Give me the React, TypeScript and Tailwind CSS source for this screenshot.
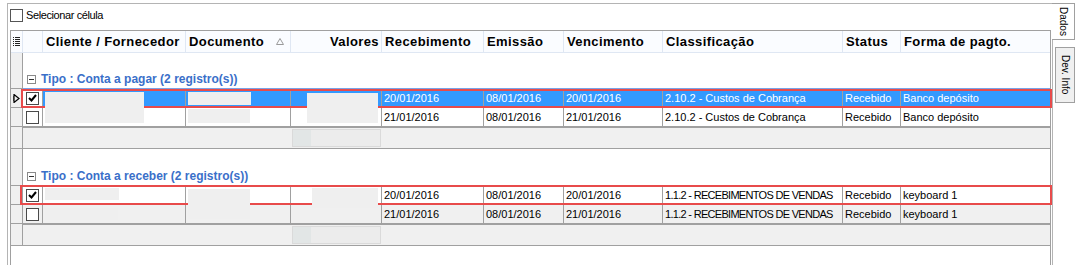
import React from 'react';

const cols = 'grid grid-cols-[12px_20px_143px_105px_91px_102px_80px_99px_180px_58px_149px]';

type Row = {
  checked: boolean;
  selected?: boolean;
  shaded?: boolean;
  receb: string;
  emis: string;
  venc: string;
  classif: string;
  status: string;
  forma: string;
};

const pagar: Row[] = [
  { checked: true, selected: true, receb: '20/01/2016', emis: '08/01/2016', venc: '20/01/2016', classif: '2.10.2 - Custos de Cobrança', status: 'Recebido', forma: 'Banco depósito' },
  { checked: false, receb: '21/01/2016', emis: '08/01/2016', venc: '21/01/2016', classif: '2.10.2 - Custos de Cobrança', status: 'Recebido', forma: 'Banco depósito' },
];

const receber: Row[] = [
  { checked: true, receb: '20/01/2016', emis: '08/01/2016', venc: '20/01/2016', classif: '1.1.2 - RECEBIMENTOS DE VENDAS', status: 'Recebido', forma: 'keyboard 1' },
  { checked: false, shaded: true, receb: '21/01/2016', emis: '08/01/2016', venc: '21/01/2016', classif: '1.1.2 - RECEBIMENTOS DE VENDAS', status: 'Recebido', forma: 'keyboard 1' },
];

function CheckBox({ checked }: { checked: boolean }) {
  return (
    <div className="w-[13px] h-[13px] border border-[#4a4a4a] bg-white flex items-center justify-center">
      {checked && (
        <svg width="9" height="8" viewBox="0 0 9 8">
          <path d="M1 4 L3.5 6.5 L8 1" stroke="#000" strokeWidth="2" fill="none" />
        </svg>
      )}
    </div>
  );
}

function HeaderCell({ children, className = '' }: { children?: React.ReactNode; className?: string }) {
  return (
    <div className={`border-r border-[#dfe7f3] flex items-center pl-[3px] text-[13px] font-bold tracking-[0.4px] text-black whitespace-nowrap overflow-hidden ${className}`}>
      {children}
    </div>
  );
}

function Cell({ children, className = '' }: { children?: React.ReactNode; className?: string }) {
  return (
    <div className={`border-r border-[#a0a0a0] flex items-center pl-[2px] whitespace-nowrap overflow-hidden ${className}`}>
      {children}
    </div>
  );
}

function DataRow({ row }: { row: Row }) {
  const bg = row.selected ? 'bg-[#3399ff] text-white' : row.shaded ? 'bg-[#f0f0f0] text-black' : 'bg-white text-black';
  return (
    <div className={`${cols} h-[19px] text-[11px]`}>
      <div className="bg-[#f0f0f0] border-r border-b border-[#a0a0a0] flex items-center justify-center">
        {row.selected && (
          <svg width="7" height="9" viewBox="0 0 7 9">
            <path d="M1 0.5 L6 4.5 L1 8.5 Z" stroke="#000" strokeWidth="1.2" fill="none" />
            <path d="M0 2 V7" stroke="#000" strokeWidth="1" />
          </svg>
        )}
      </div>
      <div className={`border-r border-b border-[#a0a0a0] flex items-center justify-center ${row.shaded ? 'bg-[#f0f0f0]' : 'bg-white'}`}>
        <CheckBox checked={row.checked} />
      </div>
      <Cell className={`border-b ${bg}`} />
      <Cell className={`border-b ${bg}`} />
      <Cell className={`border-b ${bg}`} />
      <Cell className={`border-b ${bg}`}>{row.receb}</Cell>
      <Cell className={`border-b ${bg}`}>{row.emis}</Cell>
      <Cell className={`border-b ${bg}`}>{row.venc}</Cell>
      <Cell className={`border-b ${bg}`}>
        <span className={row.classif.startsWith('1.1.2') ? 'tracking-[-0.7px]' : ''}>{row.classif}</span>
      </Cell>
      <Cell className={`border-b ${bg}`}>{row.status}</Cell>
      <Cell className={`border-b border-r-0 ${bg}`}>{row.forma}</Cell>
    </div>
  );
}

function GroupHeader({ label, focused, tall }: { label: string; focused?: boolean; tall?: boolean }) {
  return (
    <div className={`${cols} ${tall ? 'h-[37px]' : 'h-[36px]'}`}>
      <div className="bg-[#f0f0f0] border-r border-b border-[#a0a0a0]" />
      <div className={`col-span-10 bg-white flex items-end pl-[4px] ${focused ? 'border-b border-[#7aa2e6] pb-[2px]' : 'pb-[3px]'}`}>
        <div className="w-[9px] h-[9px] border border-[#8a8a8a] bg-white flex items-center justify-center mb-[2px]">
          <div className="w-[5px] h-px bg-[#333]" />
        </div>
        <span className="ml-[5px] text-[12px] font-bold text-[#3a6fc9] leading-[14px]">{label}</span>
      </div>
    </div>
  );
}

function GroupFooter() {
  return (
    <div className={`${cols} h-[22px]`}>
      <div className="bg-[#f0f0f0] border-r border-b border-[#a0a0a0]" />
      <div className="col-span-3 bg-[#f0f0f0] border-t border-b border-[#a0a0a0]" />
      <div className="bg-[#f0f0f0] border-t border-b border-[#a0a0a0] p-[1px]">
        <div className="h-full border border-[#dadada] bg-[#ececec] flex">
          <div className="w-[18px] bg-[#e2e6e6]" />
        </div>
      </div>
      <div className="col-span-6 bg-[#f0f0f0] border-t border-b border-[#a0a0a0]" />
    </div>
  );
}

export default function App() {
  return (
    <div className="relative w-[1082px] h-[265px] overflow-hidden bg-white font-['Liberation_Sans',Arial,sans-serif] text-black flex">
      <div className="w-[1053px] pl-[7px] pt-[3px] flex flex-col">
        <div className="flex-1 border-l border-t border-r border-[#b4b4b4] flex flex-col">
          <div className="h-[26px] flex items-start pt-[5px] pl-[2px]">
            <div className="w-[13px] h-[13px] border border-[#555] bg-white" />
            <span className="ml-[3px] text-[11px] tracking-[-0.4px] leading-[13px]">Selecionar célula</span>
          </div>
          <div className="ml-[2px] w-[1041px] flex-1 border border-[#a0a0a0] border-b-0 flex flex-col">
            <div className={`${cols} h-[22px] bg-[#fafcff] border-b border-[#dfe7f3]`}>
              <div className="border-r border-[#dfe7f3] flex items-center justify-center">
                <svg width="7" height="10" viewBox="0 0 7 10">
                  {[0, 2, 4, 6, 8].map((y) => (
                    <g key={y}>
                      <rect x="0" y={y} width="1" height="1" fill="#222" />
                      <rect x="2" y={y} width="5" height="1" fill="#222" />
                    </g>
                  ))}
                </svg>
              </div>
              <HeaderCell />
              <HeaderCell>Cliente / Fornecedor</HeaderCell>
              <HeaderCell className="justify-between pr-[6px]">
                <span>Documento</span>
                <svg width="8" height="7" viewBox="0 0 8 7">
                  <path d="M4 0.5 L7.5 6.5 L0.5 6.5 Z" stroke="#9a9a9a" fill="none" />
                </svg>
              </HeaderCell>
              <HeaderCell className="justify-end pr-[2px]">Valores</HeaderCell>
              <HeaderCell>Recebimento</HeaderCell>
              <HeaderCell>Emissão</HeaderCell>
              <HeaderCell>Vencimento</HeaderCell>
              <HeaderCell>Classificação</HeaderCell>
              <HeaderCell>Status</HeaderCell>
              <HeaderCell className="border-r-0">Forma de pagto.</HeaderCell>
            </div>

            <GroupHeader label="Tipo : Conta a pagar (2 registro(s))" focused />
            {pagar.map((r, i) => (
              <DataRow key={i} row={r} />
            ))}
            <GroupFooter />

            <GroupHeader label="Tipo : Conta a receber (2 registro(s))" tall />
            {receber.map((r, i) => (
              <DataRow key={i} row={r} />
            ))}
            <GroupFooter />
            <div className="flex-1 bg-white" />
          </div>
        </div>
      </div>

      <div className="w-[29px] pt-[3px] flex flex-col items-start">
        <div className="-ml-[1px] w-[23px] h-[37px] bg-white border-t border-r border-b border-[#a0a0a0] flex items-center justify-center">
          <span className="[writing-mode:vertical-rl] text-[10px] leading-[11px]">Dados</span>
        </div>
        <div className="mt-[7px] ml-[2px] w-[20px] h-[56px] bg-[#f0f0f0] border border-[#a0a0a0] flex items-center justify-center">
          <span className="[writing-mode:vertical-rl] text-[10px] leading-[11px] whitespace-nowrap">Dev. Info</span>
        </div>
      </div>

      {/* annotation rectangles */}
      <div className="absolute left-[21px] top-[89px] w-[1031px] h-[19px] border-2 border-[#e84b4b]" />
      <div className="absolute left-[20px] top-[185px] w-[1032px] h-[20px] border-2 border-[#e84b4b]" />

      {/* redacted cells */}
      <div className="absolute left-[45px] top-[92px] w-[99px] h-[31px] bg-[#efefef]" />
      <div className="absolute left-[188px] top-[92px] w-[63px] h-[13px] bg-[#efefef]" />
      <div className="absolute left-[188px] top-[109px] w-[62px] h-[14px] bg-[#efefef]" />
      <div className="absolute left-[307px] top-[93px] w-[71px] h-[30px] bg-[#efefef]" />
      <div className="absolute left-[45px] top-[188px] w-[74px] h-[12px] bg-[#efefef]" />
      <div className="absolute left-[45px] top-[208px] w-[73px] h-[12px] bg-[#efefef]" />
      <div className="absolute left-[188px] top-[189px] w-[62px] h-[30px] bg-[#efefef]" />
      <div className="absolute left-[312px] top-[188px] w-[66px] h-[20px] bg-[#efefef]" />
    </div>
  );
}
